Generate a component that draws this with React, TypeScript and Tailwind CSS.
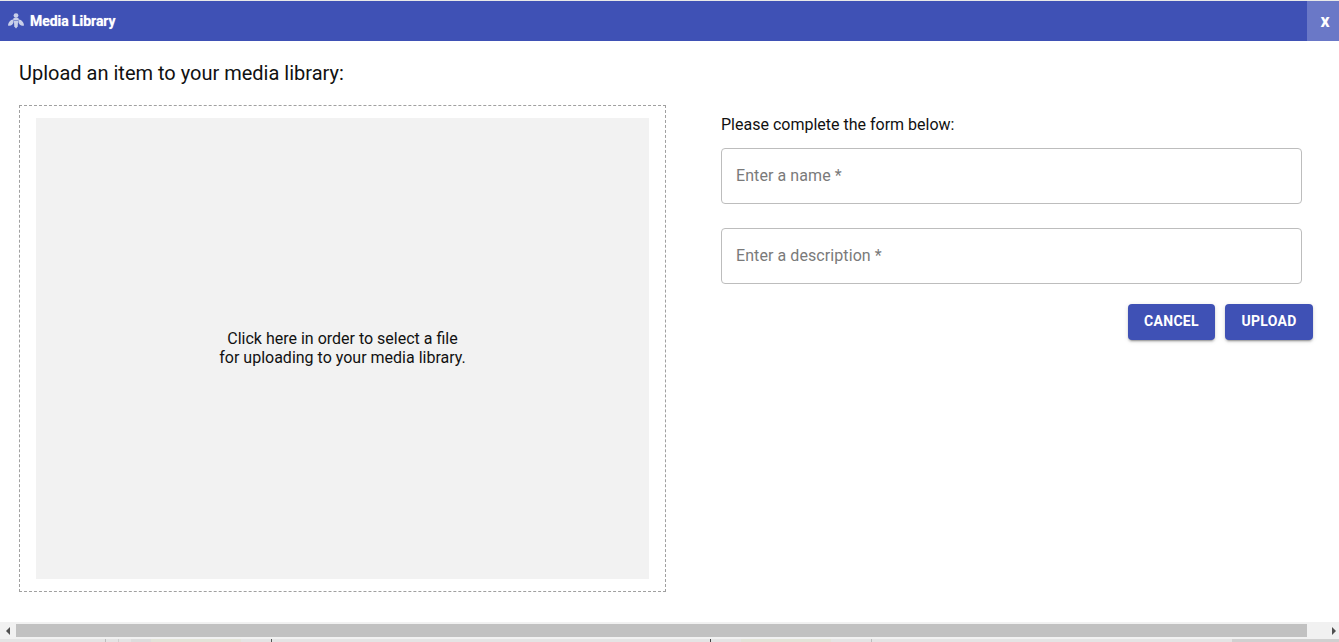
export default function App() {
  return (
    <div className="flex h-[642px] w-[1339px] flex-col overflow-hidden bg-white font-['Roboto',sans-serif]">
      <div className="h-px bg-[#e8e8e8]" />
      <header className="flex h-10 items-stretch justify-between bg-[#3f51b5] text-white">
        <div className="flex items-center pb-px pl-2">
          <svg width="16" height="16" viewBox="0 0 16 16" className="mr-[6px] text-[#c9cfe9]" fill="currentColor">
            <circle cx="8" cy="2.6" r="2.4" />
            <path d="M5.600 5h4.800l.7 2.500H4.900z" />
            <path d="M5.900 8h4.200l-.4 5.600L8 15.600l-1.700-2z" />
            <path d="M5 6.400C2.400 6.600.2 9.200 0 12.400c2.300 1 5-.4 5.700-3.400z" />
            <path d="M11 6.400c2.600.2 4.800 2.800 5 6-2.300 1-5-.4-5.700-3.400z" />
          </svg>
          <span className="text-sm font-bold tracking-[-0.05px] [text-shadow:0_0_1px_rgba(255,255,255,0.6)]">Media Library</span>
        </div>
        <button className="flex w-8 items-center justify-center bg-[#6a78c7] pb-px pl-[4px] text-lg leading-none font-bold text-white">x</button>
      </header>

      <main className="flex h-[581px] pl-[19px]">
        <section className="flex w-[647px] flex-col">
          <h1 className="mt-[20px] h-[44px] text-xl leading-6 text-[#111]">Upload an item to your media library:</h1>
          <div className="h-[487px] border border-dashed border-[#a0a0a0] px-4 pt-3">
            <div className="flex h-[461px] items-center justify-center bg-[#f2f2f2] pb-0.5 text-center text-base leading-[19px] text-[#111]">
              <p>
                Click here in order to select a file
                <br />
                for uploading to your media library.
              </p>
            </div>
          </div>
        </section>

        <section className="ml-[55px] flex w-[592px] flex-col pt-[74px]">
          <p className="h-[33px] text-base leading-5 text-[#111]">Please complete the form below:</p>
          <input
            placeholder="Enter a name *"
            className="h-14 w-[581px] rounded border border-[#bdbdbd] px-[14px] pb-0.5 text-base tracking-[0.08px] text-[#111] outline-none placeholder:text-[#7a7a7a]"
          />
          <input
            placeholder="Enter a description *"
            className="mt-6 h-14 w-[581px] rounded border border-[#bdbdbd] px-[14px] pb-0.5 text-base tracking-[0.08px] text-[#111] outline-none placeholder:text-[#7a7a7a]"
          />
          <div className="mt-5 flex justify-end gap-[10px]">
            <button className="h-9 w-[87px] rounded bg-[#3f51b5] pb-0.5 text-sm font-bold tracking-[0.3px] text-white shadow-[0_3px_1px_-2px_rgba(0,0,0,0.2),0_2px_2px_0_rgba(0,0,0,0.14),0_1px_5px_0_rgba(0,0,0,0.12)]">
              CANCEL
            </button>
            <button className="h-9 w-[88px] rounded bg-[#3f51b5] pb-0.5 text-sm font-bold tracking-[0.3px] text-white shadow-[0_3px_1px_-2px_rgba(0,0,0,0.2),0_2px_2px_0_rgba(0,0,0,0.14),0_1px_5px_0_rgba(0,0,0,0.12)]">
              UPLOAD
            </button>
          </div>
        </section>
      </main>

      <div className="flex h-[17px] items-center bg-[#f1f1f1]">
        <div className="flex w-4 items-center justify-center">
          <svg width="5" height="8" viewBox="0 0 5 8" fill="#505050"><path d="M4 0v8L0 4z" /></svg>
        </div>
        <div className="h-[13px] w-[1291px] bg-[#c1c1c1]" />
        <div className="flex flex-1 items-center justify-end pr-[3px]">
          <svg width="5" height="8" viewBox="0 0 5 8" fill="#505050"><path d="M1 0v8l4-4z" /></svg>
        </div>
      </div>

      <div className="flex h-[3px] bg-[#e4e4e4]">
        <div className="w-[105px]" />
        <div className="w-px bg-[#bdbdbd]" />
        <div className="w-[12px]" />
        <div className="w-px bg-[#cfcfcf]" />
        <div className="w-[12px]" />
        <div className="w-[20px] bg-[#dcdcdc]" />
        <div className="w-[90px] bg-[#e2e3d8]" />
        <div className="w-[30px]" />
        <div className="w-px bg-[#555555]" />
        <div className="w-[438px]" />
        <div className="w-px bg-[#444444]" />
        <div className="w-[30px]" />
        <div className="w-[90px] bg-[#e2e3d8]" />
        <div className="w-[40px]" />
        <div className="w-px bg-[#bdbdbd]" />
        <div className="w-[360px]" />
        <div className="flex-1 bg-[#d0d0d0]" />
      </div>
    </div>
  );
}
